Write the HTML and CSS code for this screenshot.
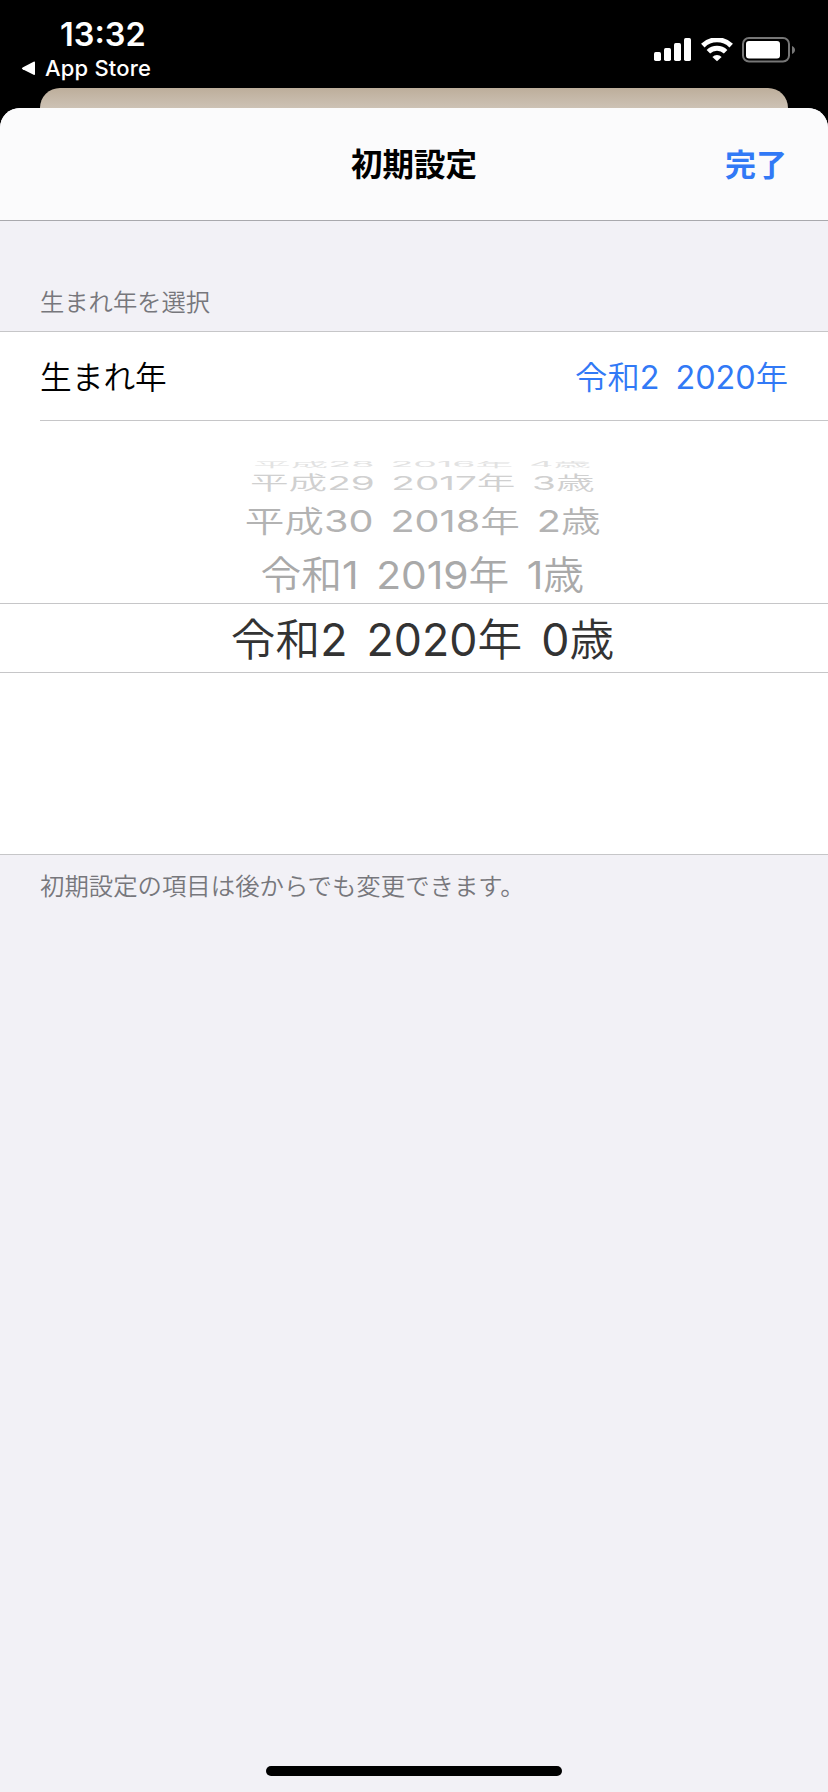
FILE: index.html
```html
<!DOCTYPE html>
<html lang="ja">
<head>
    <meta charset="UTF-8">
    <meta name="viewport" content="width=device-width, initial-scale=1.0">
    <title>初期設定</title>
    <link rel="stylesheet" href="styles.css">
</head>
<body>

<div class="screen">
    <header class="status-bar">
        <div class="status-left">
            <div class="time">13:32</div>
            <div class="back-app">
                <svg class="back-arrow" width="15" height="15" viewBox="0 0 15 15"><path d="M1.6 6.4 12.6.8Q14 .2 14 1.6V12.9Q14 14.3 12.6 13.7L1.6 8.2Q0 7.3 1.6 6.4Z" fill="#fff"/></svg>
                <span>App Store</span>
            </div>
        </div>
        <div class="status-icons">
            <svg width="37" height="24" viewBox="0 0 37 24" fill="#fff">
                <rect x="0" y="14" width="7" height="9" rx="1.7"/>
                <rect x="10" y="10" width="7" height="13" rx="1.7"/>
                <rect x="20" y="5" width="7" height="18" rx="1.7"/>
                <rect x="30" y="0" width="7" height="23" rx="1.7"/>
            </svg>
            <svg width="32" height="24" viewBox="0 0 32 24" fill="none" stroke="#fff">
                <path d="M1.8 7.6A20.3 20.3 0 0 1 30.2 7.6" stroke-width="5"/>
                <path d="M7.4 13.8A12.3 12.3 0 0 1 24.6 13.8" stroke-width="5"/>
                <path d="M11.4 18.9a6.8 6.8 0 0 1 9.2 0L16 23.3Z" fill="#fff" stroke="none"/>
            </svg>
            <svg width="54" height="26" viewBox="0 0 54 26">
                <rect x="1" y="1" width="46" height="23.5" rx="6" fill="none" stroke="#767676" stroke-width="2"/>
                <rect x="4" y="4" width="34" height="17.5" rx="3" fill="#fff"/>
                <path d="M50 9c4 1.6 4 6.4 0 8Z" fill="#767676"/>
            </svg>
        </div>
    </header>

    <div class="card-behind"></div>

    <main class="sheet">
        <div class="nav-bar">
            <h1 class="nav-title">初期設定</h1>
            <a class="nav-done">完了</a>
        </div>

        <div class="section-header">生まれ年を選択</div>

        <section class="group">
            <div class="row">
                <span class="row-label">生まれ年</span>
                <span class="row-value">令和2  2020年</span>
            </div>
            <div class="picker">
                <div class="item item-4"><span>平成28  2016年  4歳</span></div>
                <div class="item item-3"><span>平成29  2017年  3歳</span></div>
                <div class="item item-2"><span>平成30  2018年  2歳</span></div>
                <div class="item item-1"><span>令和1  2019年  1歳</span></div>
                <div class="item selected"><span>令和2  2020年  0歳</span></div>
            </div>
        </section>

        <div class="section-footer">初期設定の項目は後からでも変更できます。</div>
        <div class="home-indicator"></div>
    </main>
</div>

</body>
</html>
```

FILE: styles.css
```css
* {
    box-sizing: border-box;
}
body {
    margin: 0;
    background-color: #000;
    font-family: Inter, "Noto Sans CJK JP DemiLight", "Noto Sans CJK JP", sans-serif;
}
.screen {
    display: flex;
    flex-direction: column;
    width: 828px;
    height: 1792px;
    overflow: hidden;
    background-color: #000;
}
.status-bar {
    display: flex;
    justify-content: space-between;
    height: 88px;
    padding: 0 32px 0 21px;
    color: #fff;
}
.time {
    margin: 16px 0 0 39px;
    font-size: 32.5px;
    font-weight: 600;
    line-height: 38px;
}
.back-app {
    display: flex;
    align-items: center;
    gap: 9px;
    height: 28px;
    font-size: 22px;
    font-weight: 500;
    letter-spacing: 0.2px;
}
.status-icons {
    display: flex;
    gap: 9.5px;
    padding-top: 38px;
}
.status-icons svg:last-child {
    margin-top: -1px;
}
.card-behind {
    height: 20px;
    margin: 0 40px;
    border-radius: 20px 20px 0 0;
    background: linear-gradient(#bdae9b, #cdc2b5);
}
.sheet {
    display: flex;
    flex-direction: column;
    flex: 1;
    border-radius: 20px 20px 0 0;
    background-color: #f2f1f6;
    overflow: hidden;
}
.nav-bar {
    display: grid;
    grid-template-columns: 1fr auto 1fr;
    align-items: center;
    height: 113px;
    padding: 0 41px 4px;
    border-bottom: 1px solid #a9a9ad;
    background-color: #fbfbfc;
    font-family: "Noto Sans CJK JP", sans-serif;
}
.nav-title {
    grid-column: 2;
    margin: 0;
    font-size: 31.5px;
    font-weight: 700;
}
.nav-done {
    justify-self: end;
    color: #3179f6;
    font-size: 31px;
    font-weight: 700;
}
.section-header {
    height: 110px;
    padding: 64px 40px 0;
    color: #77777c;
    font-size: 24.3px;
    line-height: 34px;
}
.group {
    border-top: 1px solid #c6c6c8;
    border-bottom: 1px solid #c6c6c8;
    background-color: #fff;
}
.row {
    display: flex;
    justify-content: space-between;
    align-items: center;
    height: 89px;
    margin-left: 40px;
    padding: 0 40px 2px 0;
    border-bottom: 1px solid #c6c6c8;
    font-size: 31.7px;
}
.row-value {
    color: #3179f6;
    font-size: 32.3px;
    white-space: pre;
    word-spacing: -1px;
}
.picker {
    height: 433px;
    padding-top: 40px;
}
.item {
    display: flex;
    justify-content: center;
    align-items: center;
    font-size: 44.7px;
    white-space: pre;
    word-spacing: -3px;
    color: #a9a9a9;
    padding-left: 17px;
}
.item span {
    flex: none;
}
.item-4 {
    height: 8px;
    overflow: hidden;
    color: #e2e2e2;
}
.item-4 span {
    transform: translateY(-2px) scale(0.84, 0.16);
}
.item-3 {
    height: 26px;
    color: #d0d0d0;
}
.item-3 span {
    transform: translateY(-1px) scale(0.865, 0.42);
}
.item-2 {
    height: 50px;
    color: #b3b3b3;
}
.item-2 span {
    transform: translateY(-1px) scale(0.887, 0.66);
}
.item-1 {
    height: 58px;
}
.item-1 span {
    transform: translateY(-2px) scale(0.912, 0.86);
}
.selected {
    height: 70px;
    padding-bottom: 4px;
    border-top: 1px solid #c6c6c8;
    border-bottom: 1px solid #c6c6c8;
    color: #333;
}
.section-footer {
    padding: 14px 40px;
    color: #77777c;
    font-size: 24.4px;
    line-height: 34px;
}
.home-indicator {
    width: 296px;
    height: 10px;
    margin: auto auto 16px;
    border-radius: 5px;
    background-color: #000;
}
```
